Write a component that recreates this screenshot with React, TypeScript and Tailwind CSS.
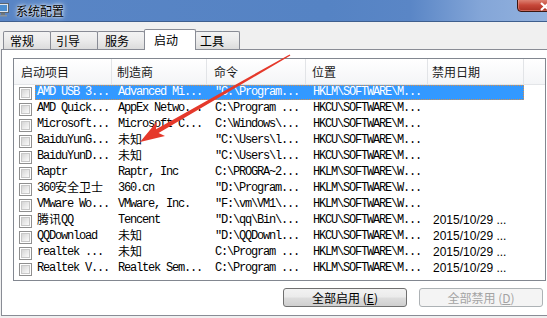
import React from "react";

const cjk = '"Noto Sans CJK SC", "Liberation Sans", sans-serif';

type Row = { name: string; maker: string; cmd: string; loc: string; date?: string };

const rows: Row[] = [
  { name: "AMD USB 3...", maker: "Advanced Mi...", cmd: '"C:\\Program...', loc: "HKLM\\SOFTWARE\\M..." },
  { name: "AMD Quick...", maker: "AppEx Netwo...", cmd: "C:\\Program ...", loc: "HKCU\\SOFTWARE\\M..." },
  { name: "Microsoft...", maker: "Microsoft C...", cmd: "C:\\Windows\\...", loc: "HKCU\\SOFTWARE\\M..." },
  { name: "BaiduYunG...", maker: "未知", cmd: '"C:\\Users\\l...', loc: "HKCU\\SOFTWARE\\M..." },
  { name: "BaiduYunD...", maker: "未知", cmd: '"C:\\Users\\l...', loc: "HKCU\\SOFTWARE\\M..." },
  { name: "Raptr", maker: "Raptr, Inc", cmd: "C:\\PROGRA~2...", loc: "HKLM\\SOFTWARE\\W..." },
  { name: "360安全卫士", maker: "360.cn", cmd: '"D:\\Program...', loc: "HKLM\\SOFTWARE\\W..." },
  { name: "VMware Wo...", maker: "VMware, Inc.", cmd: '"F:\\vm\\VM1\\...', loc: "HKLM\\SOFTWARE\\W..." },
  { name: "腾讯QQ", maker: "Tencent", cmd: '"D:\\qq\\Bin\\...', loc: "HKCU\\SOFTWARE\\M...", date: "2015/10/29" },
  { name: "QQDownload", maker: "未知", cmd: '"D:\\QQDownl...', loc: "HKCU\\SOFTWARE\\M...", date: "2015/10/29" },
  { name: "realtek ...", maker: "未知", cmd: "C:\\Program ...", loc: "HKLM\\SOFTWARE\\M...", date: "2015/10/29" },
  { name: "Realtek V...", maker: "Realtek Sem...", cmd: "C:\\Program ...", loc: "HKLM\\SOFTWARE\\M...", date: "2015/10/29" },
];

// splits a string in cjk / latin runs so each gets its own font
function Mixed({ text }: { text: string }) {
  const parts = text.split(/([\u4e00-\u9fff]+)/).filter(Boolean);
  return (
    <>
      {parts.map((p, i) =>
        /[\u4e00-\u9fff]/.test(p) ? (
          <span key={i} className="self-start h-[12px] leading-[12px] text-[12px] tracking-normal" style={{ fontFamily: cjk }}>{p}</span>
        ) : (
          <span key={i} className="h-[15px] leading-[15px] font-['Liberation_Mono',monospace] text-[12px] tracking-[-1.2px] whitespace-pre">{p}</span>
        )
      )}
    </>
  );
}

function Checkbox() {
  return (
    <div className="w-[13px] h-[13px] border border-[#8f8f8f] bg-white p-[1px] shrink-0">
      <div className="w-full h-full bg-gradient-to-br from-[#d6d6d6] to-[#fafafa] border border-[#c8c8c8]" />
    </div>
  );
}

export default function App() {
  const tabs = [
    { label: "常规", w: "w-[48px]", pl: "pl-[6px]" },
    { label: "引导", w: "w-[48px]", pl: "pl-[5px]" },
    { label: "服务", w: "w-[48px]", pl: "pl-[7px]" },
    { label: "启动", w: "w-[52px]", pl: "pl-[9px]", active: true },
    { label: "工具", w: "w-[45px]", pl: "pl-[4px]" },
  ];

  const cell = "h-[15px] flex items-center whitespace-nowrap";

  return (
    <div className="w-[547px] h-[318px] overflow-hidden relative bg-[#f0f0f0]" style={{ fontFamily: cjk }}>
      {/* ================= TITLE BAR ================= */}
      <div className="h-[22px] border-b border-[#3f5f8e] bg-[linear-gradient(90deg,#5985c5_0%,#5583c4_60%,#5a86c6_75%,#84a6d8_88%,#93b2de_100%)] flex items-center relative">
        <svg width="12" height="14" viewBox="0 0 12 14" className="absolute left-[-3px] top-[3px]">
          <rect x="0.5" y="0.5" width="11" height="9" fill="#dfe6ee" stroke="#5c6670" />
          <rect x="2" y="2" width="8" height="6" fill="#4d8fd1" />
          <rect x="4" y="10" width="4" height="2" fill="#6d7780" />
          <rect x="2" y="12" width="8" height="1.5" fill="#8a949c" />
        </svg>
        <span className="ml-[16px] text-[12px] text-black [text-shadow:0_0_6px_#fff,0_0_3px_#fff]">系统配置</span>
        <div className="absolute left-[517px] top-[-2px] w-[44px] h-[14px] rounded-bl-[4px] border border-[#3d1610] bg-gradient-to-b from-[#e08a7c] via-[#c7483a] to-[#a92f22] shadow-[inset_0_0_0_1px_rgba(255,200,190,0.35)]">
          <svg width="10" height="9" viewBox="0 0 10 9" className="absolute left-[22px] top-[3px]">
            <path d="M1 1 L9 8 M9 1 L1 8" stroke="#fff" strokeWidth="2.2" />
          </svg>
        </div>
      </div>

      {/* ================= TABS ================= */}
      <div className="h-[27px] flex items-end pl-[3px]">
        {tabs.map((t, i) => (
          <div
            key={t.label}
            className={`${t.w} ${t.pl} ${i > 0 ? "-ml-px" : ""} ${
              t.active
                ? "h-[21px] -mb-px bg-white border border-b-0 border-[#898c95] relative z-10 pt-[2px]"
                : "h-[18px] bg-gradient-to-b from-[#f3f3f3] via-[#ebebeb] to-[#dcdcdc] border border-b-0 border-[#898c95] pt-[1px]"
            } rounded-t-[2px] text-[12px] text-black leading-[16px]`}
          >
            {t.label}
          </div>
        ))}
      </div>

      {/* ================= PANEL ================= */}
      <div className="ml-[1px] w-[570px] h-[267px] bg-white border border-[#898c95] pt-[8px] pl-[11px]">
        <div className="w-[533px] h-[223px] border border-[#828790] bg-white">
          {/* header */}
          <div className="h-[26px] flex border-b border-[#e3e5e8] bg-gradient-to-b from-white to-[#f4f5f7] text-[12px] text-[#1a1a1a]">
            <div className="w-[98px] pl-[7px] border-r border-[#e2e4e7] flex items-center">启动项目</div>
            <div className="w-[95px] pl-[5px] border-r border-[#e2e4e7] flex items-center">制造商</div>
            <div className="w-[99px] pl-[7px] border-r border-[#e2e4e7] flex items-center">命令</div>
            <div className="w-[122px] pl-[6px] border-r border-[#e2e4e7] flex items-center">位置</div>
            <div className="w-[96px] pl-[4px] border-r border-[#e2e4e7] flex items-center">禁用日期</div>
            <div className="flex-1" />
          </div>

          {/* rows */}
          {rows.map((r, i) => {
            const sel = i === 0;
            return (
              <div key={i} className="h-[16px] flex items-start">
                <div className="w-[21px] h-[16px] flex items-center pl-[5px]">
                  <Checkbox />
                </div>
                <div
                  className={`w-[489px] h-[15px] flex items-center ${
                    sel ? "bg-[#3399ff] text-white outline-1 outline-dotted outline-[#d9904a] -outline-offset-1" : "text-black"
                  }`}
                >
                  <div className={`w-[77px] pl-[2px] ${cell}`}><Mixed text={r.name} /></div>
                  <div className={`w-[95px] pl-[6px] ${cell}`}><Mixed text={r.maker} /></div>
                  <div className={`w-[99px] pl-[8px] ${cell}`}><Mixed text={r.cmd} /></div>
                  <div className={`w-[122px] pl-[7px] ${cell}`}><Mixed text={r.loc} /></div>
                  <div className={`w-[96px] pl-[5px] ${cell} leading-[15px] text-[12px] font-['Liberation_Sans',sans-serif]`}>
                    {r.date ? <span>{r.date} ...</span> : null}
                  </div>
                </div>
              </div>
            );
          })}
        </div>

        {/* ================= BUTTONS ================= */}
        <div className="flex gap-[12px] ml-[270px] mt-[7px]">
          <button className="w-[124px] h-[19px] rounded-[3px] border border-[#707070] bg-[linear-gradient(180deg,#f2f2f2_0%,#ebebeb_48%,#dddddd_52%,#cfcfcf_100%)] text-[12px] text-black leading-[16px]">
            全部启用 (<span className="underline">E</span>)
          </button>
          <button className="w-[124px] h-[19px] rounded-[3px] border border-[#adb2b5] bg-[#f4f4f4] text-[12px] text-[#a3a3a3] leading-[16px]">
            全部禁用 (<span className="underline">D</span>)
          </button>
        </div>
      </div>

      {/* ================= ARROW ================= */}
      <svg className="absolute left-0 top-0 pointer-events-none" width="547" height="318" viewBox="0 0 547 318">
        <polygon
          points="140,142 165,136 158.6,133 290.4,55.6 289.6,54.4 156,129.2 157,121.5"
          fill="#e5392b"
        />
      </svg>
    </div>
  );
}
